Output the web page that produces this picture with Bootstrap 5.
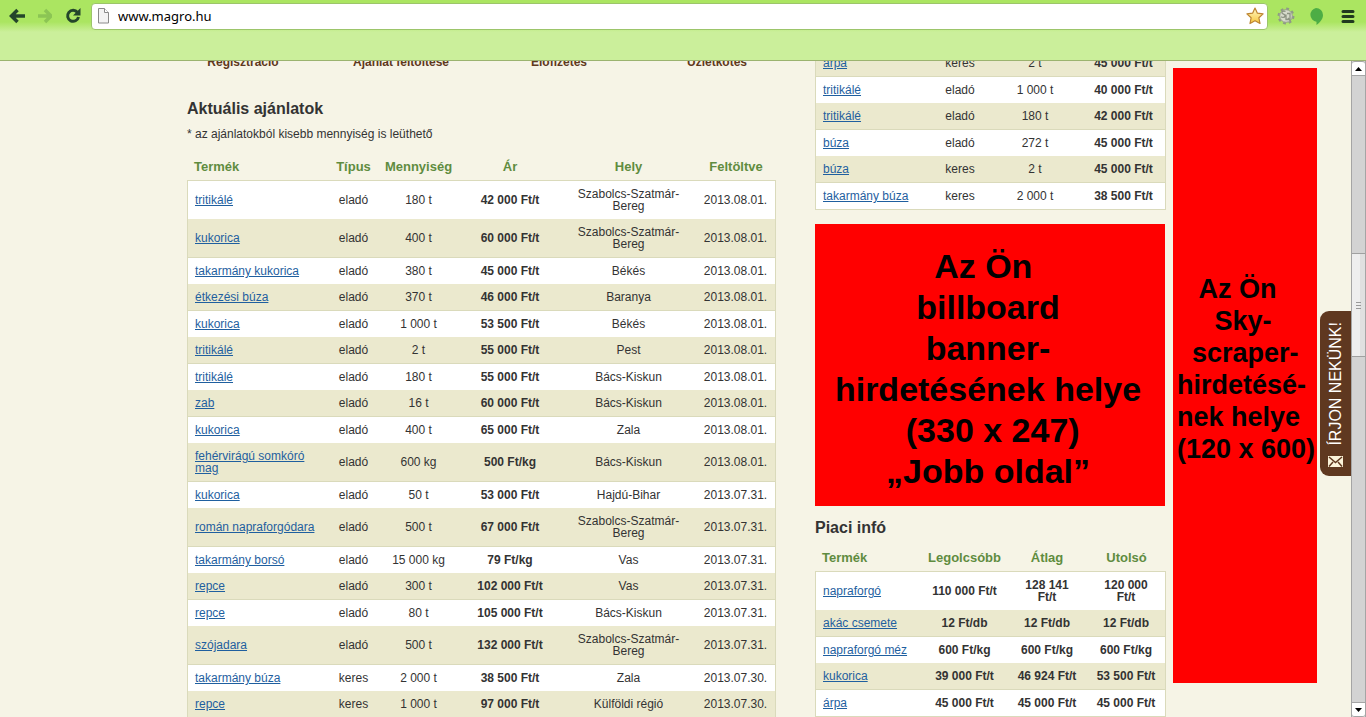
<!DOCTYPE html>
<html lang="hu">
<head>
<meta charset="utf-8">
<meta name="viewport" content="width=device-width, initial-scale=1">
<title>Magro.hu</title>
<link rel="stylesheet" href="https://cdn.jsdelivr.net/npm/bootstrap@5.3.0/dist/css/bootstrap.min.css">
<style>
body{font:12px/12px "Liberation Sans",Arial,sans-serif;color:#333;background:#f6f4e6}
/* browser bar */
.chrome-bar{height:61px;border-bottom:1px solid #9bb36f;background:linear-gradient(#abe561 0,#abe561 22px,#cbef9b 32px,#cbef9b 100%)}
.tools{height:32px;padding:0 9px 0 8px}
.extras{gap:13px}
.tool{width:18px;height:18px;border:0;padding:0;background:none;line-height:0}
.address{height:27px;border:1px solid #9cc56a;border-radius:4px;background:#fff;padding:0 3px 0 5px;margin:0 9px}
.address input{border:0;outline:0;background:none;color:#000;font:13px/20px "Noto Sans","Open Sans",sans-serif;padding:0;min-width:0}
/* page */
.pane{min-height:0;overflow:hidden}
.site{display:grid;grid-template-columns:1fr minmax(0,979px) 1fr;margin-top:-11px;padding-left:2px}
.main-cols{display:grid;grid-column:2;grid-template-columns:minmax(0,589fr) minmax(0,351fr);gap:39px;align-items:start}
.steps{margin:0 -20px 25px -23px;line-height:24px}
.steps a{color:#5f3820;font-weight:bold;text-decoration:none}
h2{font-size:16px;line-height:20px;font-weight:bold;margin:0}
.note{line-height:16px;margin:7px 0 10px}
.offers{table-layout:fixed;border-collapse:separate;border-spacing:0}
.offers th{font-size:13px;line-height:15px;color:#5f8c3f;padding:7px 6px 6px;border-bottom:1px solid #dadabb;white-space:nowrap;text-align:center}
.offers td{padding:7px 6px;background:#fff}
.offers th:first-child{text-align:left;padding-left:7px}
.offers td:first-child{text-align:left;padding-left:7px;border-left:1px solid #dadabb}
.offers td:last-child{border-right:1px solid #dadabb}
.offers .even td{background:#ebe9ce;border-bottom:1px solid #dadabb}
.offers tbody tr:last-child td{border-bottom:1px solid #dadabb}
.offers a{color:#1f5f9f;text-decoration:underline}
.market{margin-top:5px}
.ad{background:#f00;color:#000;font-weight:bold;white-space:pre}
.billboard{width:350px;max-width:100%;min-height:282px;margin:14px 0 12px;padding:22px 4px 0 0;font-size:34px;line-height:41px;text-align:center}
.sky{width:144px;height:615px;margin:18px 0 0 7px;padding:205px 0 0 4px;font-size:27px;line-height:32px;overflow:hidden}
.write-us{position:absolute;right:0;top:250px;width:31px;height:165px;border-radius:9px 0 0 9px;background:#5f3820;color:#fff;font-size:16px;line-height:18px;text-decoration:none;padding-bottom:9px;gap:10px}
.write-us span{writing-mode:vertical-rl;transform:rotate(180deg)}
/* scroll bar */
.scroller{width:15px;background:#d3d3d3;border:solid #a5a5a5;border-width:0 1px}
.scroller button{height:15px;border:0;padding:0;background:#fff;line-height:0}
.scroller .up{border-bottom:1px solid #a5a5a5;border-top:1px solid #a5a5a5;border-radius:3px 3px 0 0}
.scroller .down{border-top:1px solid #a5a5a5;border-bottom:1px solid #a5a5a5;border-radius:0 0 3px 3px}
.gap-above{flex:177 1 0}.gap-below{flex:345 1 0}
.thumb{height:104px;border:solid #a0a0a0;border-width:1px 0;background:linear-gradient(90deg,#eee 60%,#e0e0e0 60%)}
.grip{width:5px;height:7px;border:solid #999;border-width:1px 0;background:linear-gradient(transparent 2px,#999 2px,#999 3px,transparent 3px)}
</style>
</head>
<body class="vh-100 d-flex flex-column overflow-hidden">
<header class="chrome-bar flex-shrink-0">
  <div class="tools d-flex align-items-center">
    <button class="tool" aria-label="Vissza"><svg width="18" height="18" viewBox="0 0 18 18" fill="none" stroke="#24452b" stroke-width="3.500"><path d="M17 9H4M9.500 3 3.500 9l6 6"/></svg></button>
    <button class="tool ms-2 me-2" aria-label="Előre"><svg width="18" height="18" viewBox="0 0 18 18" fill="none" stroke="#8cc554" stroke-width="3.500"><path d="M4 9h12M11 3l6 6-6 6"/></svg></button>
    <button class="tool ms-1" aria-label="Frissítés"><svg width="18" height="18" viewBox="0 0 18 18"><path d="M13.500 5.500A5.500 5.500 0 1 0 14.500 10" fill="none" stroke="#24452b" stroke-width="3"/><path d="M16.500 1v7.500H9z" fill="#24452b"/></svg></button>
    <div class="address flex-grow-1 d-flex align-items-center">
      <svg width="13" height="16" viewBox="0 0 13 16"><path d="M1.500.5h6l4 4v10.500h-10z" fill="#f3f3f3" stroke="#8a8a8a"/><path d="M7.500.5v4h4" fill="#fff" stroke="#8a8a8a"/></svg>
      <input class="flex-grow-1 ms-2" type="text" value="www.magro.hu" aria-label="Cím">
      <button class="tool" aria-label="Könyvjelző"><svg width="18" height="18" viewBox="0 0 18 18"><defs><linearGradient id="gold" x2="0" y2="1"><stop stop-color="#fffac9"/><stop offset="1" stop-color="#f7c53a"/></linearGradient></defs><path d="m9 1 2.400 5.200 5.700.7-4.200 3.900 1.100 5.700-5-2.800-5 2.800 1.100-5.700L.9 6.900l5.700-.7z" fill="url(#gold)" stroke="#bd8532" stroke-width="1.200" stroke-linejoin="round"/></svg></button>
    </div>
    <div class="extras d-flex">
      <button class="tool" aria-label="SQ"><svg width="18" height="18" viewBox="0 0 18 18"><circle cx="9" cy="9" r="7.200" fill="none" stroke="#8f9b85" stroke-width="2.500" stroke-dasharray="2.800 2.850"/><circle cx="9" cy="9" r="6.300" fill="#d6dacb" stroke="#97a08c"/><path d="M8.500 4.500c-2-1-4 0-3.500 1.500s3.500 1 3 3-3 1.500-4 .8M10 6.500h3v6h-4v-5M11 11l2.500 3" fill="none" stroke="#8b9282" stroke-width="1.300"/></svg></button>
      <button class="tool" aria-label="Hangouts"><svg width="18" height="18" viewBox="0 0 18 18"><path d="M8 1a7 7 0 0 1 7 7c0 4-3 7.500-6.500 10v-3.200A7 7 0 0 1 8 1z" fill="#4dad45"/></svg></button>
      <button class="tool" aria-label="Menü"><svg width="18" height="18" viewBox="0 0 18 18" stroke="#20391f" stroke-width="3" stroke-linecap="round"><path d="M4 4.500h10M4 9.500h10M4 14.500h10"/></svg></button>
    </div>
  </div>
</header>
<div class="pane flex-grow-1 d-flex">
  <div class="flex-grow-1 position-relative overflow-hidden">
    <div class="site">
      <main class="main-cols">
        <section>
          <nav class="steps row row-cols-4 g-0 text-center">
            <a href="#" class="col">Regisztráció</a><a href="#" class="col">Ajánlat feltöltése</a><a href="#" class="col">Előfizetés</a><a href="#" class="col">Üzletkötés</a>
          </nav>
          <h2>Aktuális ajánlatok</h2>
          <p class="note">* az ajánlatokból kisebb mennyiség is leüthető</p>
          <table class="offers w-100 text-center align-middle">
            <colgroup><col width="142"><col width="49"><col width="81"><col width="102"><col width="135"><col width="80"></colgroup>
            <thead><tr><th>Termék</th><th>Típus</th><th>Mennyiség</th><th>Ár</th><th>Hely</th><th>Feltöltve</th></tr></thead>
            <tbody>
              <tr><td><a href="#">tritikálé</a></td><td>eladó</td><td>180 t</td><td><b>42 000 Ft/t</b></td><td>Szabolcs-Szatmár-Bereg</td><td>2013.08.01.</td></tr>
              <tr class="even"><td><a href="#">kukorica</a></td><td>eladó</td><td>400 t</td><td><b>60 000 Ft/t</b></td><td>Szabolcs-Szatmár-Bereg</td><td>2013.08.01.</td></tr>
              <tr><td><a href="#">takarmány kukorica</a></td><td>eladó</td><td>380 t</td><td><b>45 000 Ft/t</b></td><td>Békés</td><td>2013.08.01.</td></tr>
              <tr class="even"><td><a href="#">étkezési búza</a></td><td>eladó</td><td>370 t</td><td><b>46 000 Ft/t</b></td><td>Baranya</td><td>2013.08.01.</td></tr>
              <tr><td><a href="#">kukorica</a></td><td>eladó</td><td>1 000 t</td><td><b>53 500 Ft/t</b></td><td>Békés</td><td>2013.08.01.</td></tr>
              <tr class="even"><td><a href="#">tritikálé</a></td><td>eladó</td><td>2 t</td><td><b>55 000 Ft/t</b></td><td>Pest</td><td>2013.08.01.</td></tr>
              <tr><td><a href="#">tritikálé</a></td><td>eladó</td><td>180 t</td><td><b>55 000 Ft/t</b></td><td>Bács-Kiskun</td><td>2013.08.01.</td></tr>
              <tr class="even"><td><a href="#">zab</a></td><td>eladó</td><td>16 t</td><td><b>60 000 Ft/t</b></td><td>Bács-Kiskun</td><td>2013.08.01.</td></tr>
              <tr><td><a href="#">kukorica</a></td><td>eladó</td><td>400 t</td><td><b>65 000 Ft/t</b></td><td>Zala</td><td>2013.08.01.</td></tr>
              <tr class="even"><td><a href="#">fehérvirágú somkóró mag</a></td><td>eladó</td><td>600 kg</td><td><b>500 Ft/kg</b></td><td>Bács-Kiskun</td><td>2013.08.01.</td></tr>
              <tr><td><a href="#">kukorica</a></td><td>eladó</td><td>50 t</td><td><b>53 000 Ft/t</b></td><td>Hajdú-Bihar</td><td>2013.07.31.</td></tr>
              <tr class="even"><td><a href="#">román napraforgódara</a></td><td>eladó</td><td>500 t</td><td><b>67 000 Ft/t</b></td><td>Szabolcs-Szatmár-Bereg</td><td>2013.07.31.</td></tr>
              <tr><td><a href="#">takarmány borsó</a></td><td>eladó</td><td>15 000 kg</td><td><b>79 Ft/kg</b></td><td>Vas</td><td>2013.07.31.</td></tr>
              <tr class="even"><td><a href="#">repce</a></td><td>eladó</td><td>300 t</td><td><b>102 000 Ft/t</b></td><td>Vas</td><td>2013.07.31.</td></tr>
              <tr><td><a href="#">repce</a></td><td>eladó</td><td>80 t</td><td><b>105 000 Ft/t</b></td><td>Bács-Kiskun</td><td>2013.07.31.</td></tr>
              <tr class="even"><td><a href="#">szójadara</a></td><td>eladó</td><td>500 t</td><td><b>132 000 Ft/t</b></td><td>Szabolcs-Szatmár-Bereg</td><td>2013.07.31.</td></tr>
              <tr><td><a href="#">takarmány búza</a></td><td>keres</td><td>2 000 t</td><td><b>38 500 Ft/t</b></td><td>Zala</td><td>2013.07.30.</td></tr>
              <tr class="even"><td><a href="#">repce</a></td><td>keres</td><td>1 000 t</td><td><b>97 000 Ft/t</b></td><td>Külföldi régió</td><td>2013.07.30.</td></tr>
            </tbody>
          </table>
        </section>
        <aside>
          <table class="offers w-100 text-center align-middle">
            <colgroup><col width="117"><col width="56"><col width="94"><col width="84"></colgroup>
            <tbody>
              <tr class="even"><td><a href="#">árpa</a></td><td>keres</td><td>2 t</td><td><b>45 000 Ft/t</b></td></tr>
              <tr><td><a href="#">tritikálé</a></td><td>eladó</td><td>1 000 t</td><td><b>40 000 Ft/t</b></td></tr>
              <tr class="even"><td><a href="#">tritikálé</a></td><td>eladó</td><td>180 t</td><td><b>42 000 Ft/t</b></td></tr>
              <tr><td><a href="#">búza</a></td><td>eladó</td><td>272 t</td><td><b>45 000 Ft/t</b></td></tr>
              <tr class="even"><td><a href="#">búza</a></td><td>keres</td><td>2 t</td><td><b>45 000 Ft/t</b></td></tr>
              <tr><td><a href="#">takarmány búza</a></td><td>keres</td><td>2 000 t</td><td><b>38 500 Ft/t</b></td></tr>
            </tbody>
          </table>
          <div class="ad billboard">Az Ön&nbsp;
billboard
banner-
hirdetésének helye
&nbsp;(330 x 247)
„Jobb oldal”</div>
          <h2>Piaci infó</h2>
          <table class="offers market w-100 text-center align-middle">
            <colgroup><col width="107"><col width="85"><col width="80"><col width="79"></colgroup>
            <thead><tr><th>Termék</th><th>Legolcsóbb</th><th>Átlag</th><th>Utolsó</th></tr></thead>
            <tbody class="fw-bold">
              <tr><td class="fw-normal"><a href="#">napraforgó</a></td><td>110 000 Ft/t</td><td>128 141<br>Ft/t</td><td>120 000<br>Ft/t</td></tr>
              <tr class="even"><td class="fw-normal"><a href="#">akác csemete</a></td><td>12 Ft/db</td><td>12 Ft/db</td><td>12 Ft/db</td></tr>
              <tr><td class="fw-normal"><a href="#">napraforgó méz</a></td><td>600 Ft/kg</td><td>600 Ft/kg</td><td>600 Ft/kg</td></tr>
              <tr class="even"><td class="fw-normal"><a href="#">kukorica</a></td><td>39 000 Ft/t</td><td>46 924 Ft/t</td><td>53 500 Ft/t</td></tr>
              <tr><td class="fw-normal"><a href="#">árpa</a></td><td>45 000 Ft/t</td><td>45 000 Ft/t</td><td>45 000 Ft/t</td></tr>
            </tbody>
          </table>
        </aside>
      </main>
      <div class="ad sky">   Az Ön
     Sky-
  scraper-
hirdetésé-
nek helye
(120 x 600)</div>
    </div>
    <a href="#" class="write-us d-flex flex-column align-items-center justify-content-end"><span>ÍRJON NEKÜNK!</span><svg width="15" height="11" viewBox="0 0 15 11"><path d="M0 0h15v11H0z" fill="#fbf3da"/><path d="M1 1l6.500 5.500L14 1M1 10.500 5 6M14 10.500 10 6" fill="none" stroke="#5f3820" stroke-width="1.500"/></svg></a>
  </div>
  <div class="scroller flex-shrink-0 d-flex flex-column">
    <button class="up" aria-label="Fel"><svg width="7" height="4"><path d="M3.500 0 7 4H0z"/></svg></button>
    <div class="gap-above"></div>
    <div class="thumb d-flex align-items-center justify-content-center"><div class="grip"></div></div>
    <div class="gap-below"></div>
    <button class="down" aria-label="Le"><svg width="7" height="4"><path d="M0 0h7L3.500 4z"/></svg></button>
  </div>
</div>
<script src="https://cdn.jsdelivr.net/npm/bootstrap@5.3.0/dist/js/bootstrap.bundle.min.js"></script>
</body>
</html>
